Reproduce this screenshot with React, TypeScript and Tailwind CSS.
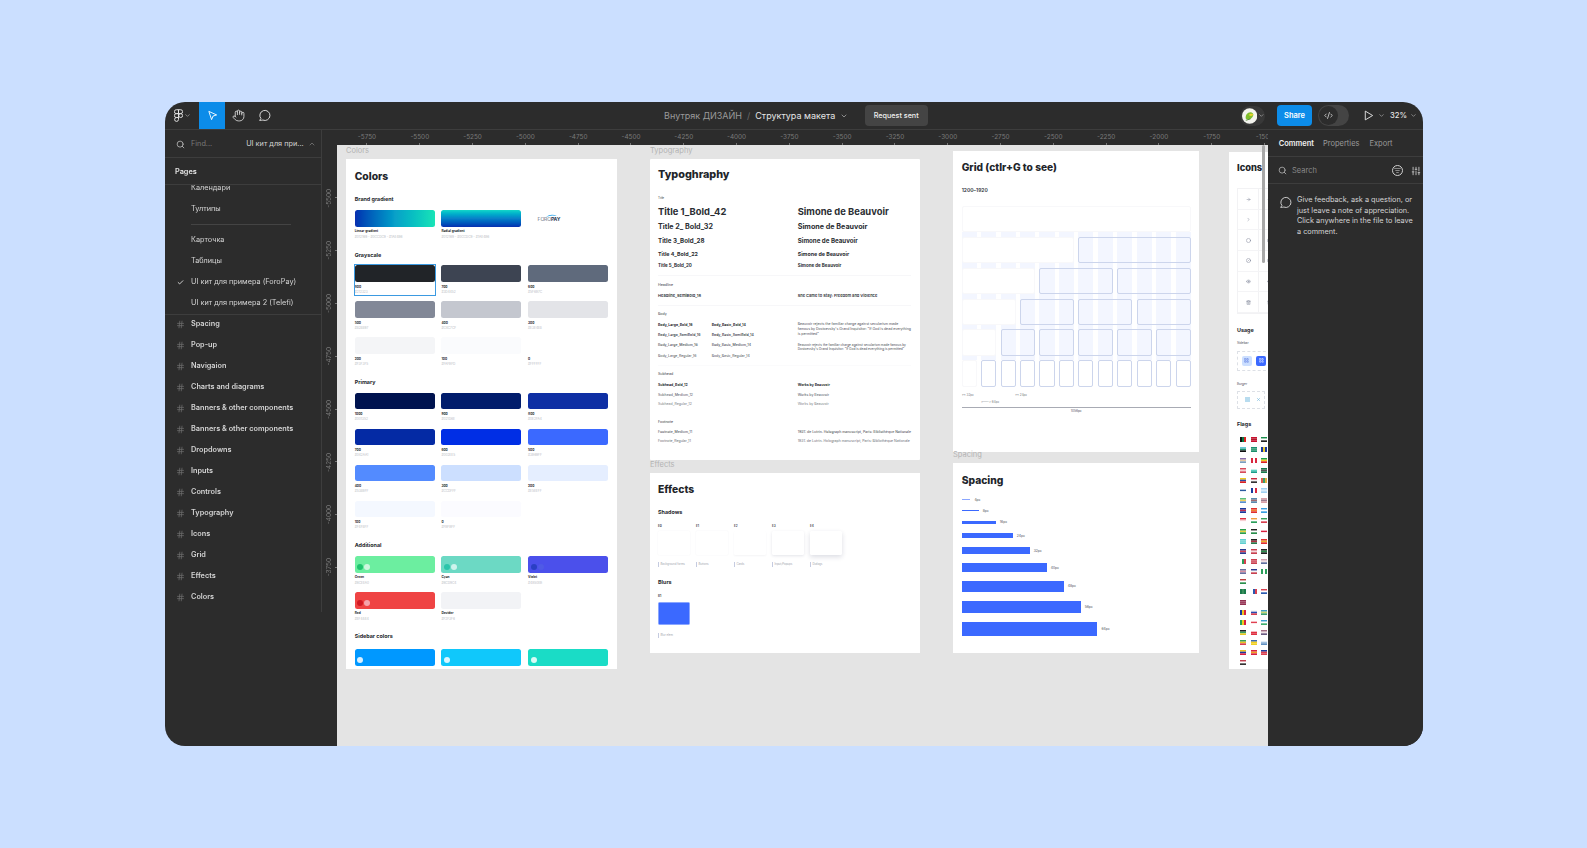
import React from "react";
import { Search, Hand, ChevronDown, ChevronUp, Check, Hash, SlidersVertical, ListFilter, CodeXml, ArrowRight, ChevronRight, Circle, CircleSlash, Eye, Trash2, X, LayoutGrid } from "lucide-react";

const CommentIcon = ({ s = 12, c = "#e6e6e6" }: { s?: number; c?: string }) => (
  <svg width={s} height={s} viewBox="0 0 24 24" fill="none" stroke={c} strokeWidth="1.7">
    <path d="M3 21 L5.4 17.6 A9.3 9.3 0 1 1 9 20.4 Q6 21 3 21 Z" strokeLinejoin="round" />
  </svg>
);
const PlayIcon = ({ s = 11 }: { s?: number }) => (
  <svg width={s} height={s} viewBox="0 0 12 12" fill="none" stroke="#e6e6e6" strokeWidth="1"><path d="M2.5 1.2 L10.5 6 L2.5 10.8 Z" strokeLinejoin="round" /></svg>
);
const Figma = () => (
  <svg width="9" height="13" viewBox="0 0 12 18" fill="none" stroke="#e6e6e6" strokeWidth="1.3">
    <path d="M6 1H3a2.7 2.7 0 0 0 0 5.4h3zM6 1h3a2.7 2.7 0 0 1 0 5.4H6zM6 6.4H3a2.7 2.7 0 0 0 0 5.4h3zM6 11.8H3a2.7 2.7 0 1 0 3 2.7z" />
    <circle cx="9" cy="9.1" r="2.7" />
  </svg>
);
const Cursor = () => (
  <svg width="11" height="11" viewBox="0 0 12 12" fill="none" stroke="#fff" strokeWidth="1"><path d="M2 1.5 L10.5 5.4 L6.6 6.6 L5 10.5 Z" strokeLinejoin="round" /></svg>
);
const Avatar = () => (
  <svg width="16" height="16" viewBox="0 0 16 16">
    <circle cx="8" cy="8" r="8" fill="#f4f4ee" />
    <path d="M4 11 C3 7 6 3.5 9.5 4 C12 4.5 12.5 7 11 9 C9.5 11 7 12.5 4 11 Z" fill="#7fbf2e" />
    <path d="M7 7 C8 5.5 11 5 12 6.5 C11 8 9 8.5 7 7 Z" fill="#e9d22f" />
    <path d="M4 12.5 L9 11" stroke="#3c7a1e" strokeWidth="0.8" />
  </svg>
);

const H = ({ className = "", children }: { className?: string; children: React.ReactNode }) => (
  <div className={`flex h-[6px] items-center text-[5.4px] font-bold leading-none text-[#25282e] whitespace-nowrap ${className}`}>{children}</div>
);
const CardTitle = ({ children }: { children: React.ReactNode }) => (
  <div className="flex h-[12px] items-center text-[10.3px] font-extrabold leading-none text-[#22252a] whitespace-nowrap">{children}</div>
);

type Sw = { bg: string; name: string; hex: string; dots?: string[] };
const Swatch = ({ bg, name, hex, dots }: Sw) => (
  <div className="h-[36px] w-[80px]">
    <div className={`flex h-[16.7px] items-end gap-[1.2px] rounded-[2.5px] pb-[3px] pl-[2.6px] ${bg}`}>
      {dots?.map((d, i) => <span key={i} className={`h-[6px] w-[6px] rounded-full ${d}`} />)}
    </div>
    <div className="mt-[2.6px] flex h-[5.3px] items-center text-[3.2px] font-bold leading-none text-[#25282e]">{name}</div>
    <div className="flex h-[5.3px] items-center text-[3.2px] leading-none text-[#b9bcc4]">{hex}</div>
  </div>
);
const SwGrid = ({ items, className = "" }: { items: (Sw | null)[]; className?: string }) => (
  <div className={`grid grid-cols-[80px_80px_80px] gap-x-[6.7px] ${className}`}>
    {items.map((it, i) => (it ? <Swatch key={i} {...it} /> : <div key={i} />))}
  </div>
);

const gray: Sw[] = [
  { bg: "bg-[#212428]", name: "800", hex: "#212323" },
  { bg: "bg-[#3d4452]", name: "700", hex: "#3D4452" },
  { bg: "bg-[#5f6a7c]", name: "600", hex: "#5F6B7C" },
  { bg: "bg-[#828897]", name: "500", hex: "#828897" },
  { bg: "bg-[#c4c7cf]", name: "400", hex: "#C4C7CF" },
  { bg: "bg-[#e3e4e8]", name: "300", hex: "#E3E4E8" },
  { bg: "bg-[#f4f5f7]", name: "200", hex: "#F3F3F5" },
  { bg: "bg-[#fafbfd]", name: "100", hex: "#FAFBFD" },
  { bg: "bg-white", name: "0", hex: "#FFFFFF" },
];
const primary: (Sw | null)[] = [
  { bg: "bg-[#00134f]", name: "1000", hex: "#001352" },
  { bg: "bg-[#011d6c]", name: "900", hex: "#021D6E" },
  { bg: "bg-[#0e2fa4]", name: "800", hex: "#0E2FA4" },
  { bg: "bg-[#042aa4]", name: "700", hex: "#042AA1" },
  { bg: "bg-[#002ee5]", name: "600", hex: "#002EE5" },
  { bg: "bg-[#3b69ff]", name: "500", hex: "#3B69FF" },
  { bg: "bg-[#538bff]", name: "400", hex: "#538BFF" },
  { bg: "bg-[#ccdfff]", name: "300", hex: "#CCDFFF" },
  { bg: "bg-[#e5eeff]", name: "200", hex: "#E5EEFF" },
  { bg: "bg-[#f4f8ff]", name: "100", hex: "#F4F8FF" },
  { bg: "bg-[#fbfbff]", name: "0", hex: "#FBFBFF" },
  null,
];
const additional: (Sw | null)[] = [
  { bg: "bg-[#6ceea0]", name: "Green", hex: "#6CEEA0", dots: ["bg-[#1fc46f]", "bg-[#cdf7de]"] },
  { bg: "bg-[#6cd9c4]", name: "Cyan", hex: "#6CD9C4", dots: ["bg-[#2cc5ab]", "bg-[#cdf3ec]"] },
  { bg: "bg-[#4b50eb]", name: "Violet", hex: "#4B50EB", dots: ["bg-[#2a3fc4]", "bg-[#4f5ae6]"] },
  { bg: "bg-[#ef4444]", name: "Red", hex: "#EF4444", dots: ["bg-[#d11a24]", "bg-[#f5a3ab]"] },
  { bg: "bg-[#f2f3f6]", name: "Devider", hex: "#F2F3F6" },
  null,
];
const sidebarColors = [
  { bg: "bg-[#0098ff]", dot: "bg-[#d9f0ff]" },
  { bg: "bg-[#10c8fb]", dot: "bg-[#d9f6ff]" },
  { bg: "bg-[#1adcc6]", dot: "bg-[#d9fbf6]" },
];

const ColorsCard = () => (
  <div className="relative h-full overflow-hidden bg-white pl-[8.7px] pt-[10.7px]">
    <CardTitle>Colors</CardTitle>
    <H className="mt-[15px]">Brand gradient</H>
    <div className="mt-[7.3px] flex gap-x-[6.7px]">
      <Swatch bg="bg-gradient-to-r from-[#0a2eb0] via-[#0aa0c8] to-[#1ae4b6]" name="Linear gradient" hex="#012169 - #0CCDC9 - #1AE4B6" />
      <Swatch bg="bg-gradient-to-b from-[#14d6c8] via-[#0a80c8] to-[#0a2eb0]" name="Radial gradient" hex="#012169 - #0CCDC9 - #1AE4B6" />
      <div className="flex h-[16.7px] w-[80px] flex-col items-start justify-center pl-[9.5px]">
        <svg width="11" height="3" viewBox="0 0 11 3" className="ml-[8px]"><path d="M0 3 Q5 -1 11 2 Q5 0.5 0 3 Z" fill="#1e9fe8" /></svg>
        <div className="text-[5px] leading-none tracking-[-0.1px] text-[#2b3a55]"><span className="font-light">FORO</span><span className="font-bold">PAY</span></div>
      </div>
    </div>
    <H className="mt-[6.4px]">Grayscale</H>
    <SwGrid items={gray} className="mt-[7px]" />
    <H className="mt-[6.3px]">Primary</H>
    <SwGrid items={primary} className="mt-[7px]" />
    <H className="mt-[6px]">Additional</H>
    <SwGrid items={additional} className="mt-[7.3px]" />
    <H className="mt-[6px]">Sidebar colors</H>
    <div className="mt-[9.4px] flex gap-x-[6.7px]">
      {sidebarColors.map((c) => (
        <div key={c.bg} className={`flex h-[16.7px] w-[80px] items-end rounded-[2.5px] pb-[3px] pl-[2.6px] ${c.bg}`}>
          <span className={`h-[6px] w-[6px] rounded-full ${c.dot}`} />
        </div>
      ))}
    </div>
    <div className="absolute left-[7.7px] top-[105px] h-[31.5px] w-[82px] border border-[#3b9ae1]" />
  </div>
);

const Mini = ({ className = "", children }: { className?: string; children: React.ReactNode }) => (
  <div className={`flex h-[10px] items-center text-[3.6px] leading-none text-[#3a3d44] whitespace-nowrap ${className}`}>{children}</div>
);
const TRow = ({ h, size, label }: { h: string; size: string; label: string }) => (
  <div className={`grid grid-cols-[139.7px_1fr] items-center font-bold leading-none text-[#2b2e33] whitespace-nowrap ${h} ${size}`}>
    <span>{label}</span>
    <span>Simone de Beauvoir</span>
  </div>
);
const TwoCol = ({ a, b, className = "" }: { a: string; b: string; className?: string }) => (
  <div className={`grid h-[10px] grid-cols-[139.7px_1fr] items-center text-[3.5px] leading-none whitespace-nowrap ${className}`}>
    <span>{a}</span>
    <span>{b}</span>
  </div>
);

const TypographyCard = () => (
  <div className="h-full overflow-hidden rounded-[1px] bg-white pl-[8px] pr-[9px] pt-[10.7px]">
    <div className="flex h-[12px] items-center text-[10.8px] font-extrabold leading-none text-[#22252a]">Typoghraphy</div>
    <Mini className="mt-[11px] h-[11.5px] text-[3px]">Title</Mini>
    <TRow h="h-[15px]" size="text-[9.4px]" label="Title 1_Bold_42" />
    <TRow h="h-[15px]" size="text-[7.2px]" label="Title 2_ Bold_32" />
    <TRow h="h-[14px]" size="text-[6.2px]" label="Title 3_Bold_28" />
    <TRow h="h-[12px]" size="text-[5.3px]" label="Title 4_Bold_22" />
    <TRow h="h-[12px]" size="text-[4.5px]" label="Title 5_Bold_20" />
    <div className="mt-[3px] border-t border-[#f7f7f9]" />
    <Mini className="mt-[4.2px]">Headline</Mini>
    <TwoCol a="Headline_SemiBold_18" b="She Came to Stay: Freedom and Violence" className="h-[12px] text-[4px] font-semibold text-[#2b2e33]" />
    <div className="mt-[2.7px] border-t border-[#f7f7f9]" />
    <Mini className="mt-[3.5px]">Body</Mini>
    <div className="mt-[1.2px] grid grid-cols-[139.7px_1fr]">
      <div className="grid h-[40.8px] grid-cols-[53.7px_1fr] grid-rows-4 items-center text-[3.5px] leading-none text-[#4a4d55] whitespace-nowrap">
        <span className="font-bold text-[#2b2e33]">Body_Large_Bold_16</span>
        <span className="font-bold text-[#2b2e33]">Body_Basic_Bold_14</span>
        <span className="font-semibold">Body_Large_SemiBold_16</span>
        <span className="font-semibold">Body_Basic_SemiBold_14</span>
        <span className="font-medium">Body_Large_Medium_16</span>
        <span className="font-medium">Body_Basic_Medium_14</span>
        <span>Body_Large_Regular_16</span>
        <span>Body_Basic_Regular_14</span>
      </div>
      <div className="pt-[1px] text-[3.5px] leading-[5px] text-[#4a4d55]">
        <p>Beauvoir rejects the familiar charge against secularism made famous by Dostoevsky's Grand Inquisitor: "If God is dead everything is permitted"</p>
        <p className="mt-[6px] text-[3.2px] leading-[4.4px]">Beauvoir rejects the familiar charge against secularism made famous by Dostoevsky's Grand Inquisitor: "If God is dead everything is permitted"</p>
      </div>
    </div>
    <div className="mt-[3.2px] border-t border-[#fbfbfc]" />
    <Mini className="mt-[3.7px]">Subhead</Mini>
    <TwoCol a="Subhead_Bold_12" b="Works by Beauvoir" className="mt-[1px] font-bold text-[#2b2e33]" />
    <TwoCol a="Subhead_Medium_12" b="Works by Beauvoir" className="font-medium text-[#6a6d75]" />
    <TwoCol a="Subhead_Regular_12" b="Works by Beauvoir" className="-mt-[0.3px] text-[#7a7d85]" />
    <Mini className="mt-[7.3px]">Footnote</Mini>
    <TwoCol a="Footnote_Medium_11" b="1931: de Lutrin. Holograph manuscript, Paris: Bibliothèque Nationale" className="font-medium text-[#5a5d65]" />
    <TwoCol a="Footnote_Regular_11" b="1931: de Lutrin. Holograph manuscript, Paris: Bibliothèque Nationale" className="-mt-[0.5px] text-[#6a6d75]" />
  </div>
);

const shadows = [
  { n: "E0", cap: "Background forms", s: "shadow-[0_0_2px_rgba(30,40,80,0.05)]" },
  { n: "E1", cap: "Buttons", s: "shadow-[0_0_2px_rgba(30,40,80,0.06)]" },
  { n: "E2", cap: "Cards", s: "shadow-[0_1px_2px_rgba(30,40,80,0.05)]" },
  { n: "E3", cap: "Input/Popups", s: "shadow-[0_1px_3px_rgba(30,40,80,0.12)]" },
  { n: "E4", cap: "Dialogs", s: "shadow-[0_2px_5px_rgba(30,40,80,0.16)]" },
];
const Caption = ({ children, className = "" }: { children: React.ReactNode; className?: string }) => (
  <div className={`flex h-[5px] items-center border-l border-[#c5cbe0] pl-[1.5px] text-[2.8px] leading-none text-[#a3a6ae] whitespace-nowrap ${className}`}>{children}</div>
);
const EffectsCard = () => (
  <div className="h-full overflow-hidden bg-white pl-[8px] pt-[10px]">
    <CardTitle>Effects</CardTitle>
    <H className="mt-[14.7px]">Shadows</H>
    <div className="mt-[9px] flex gap-x-[6px]">
      {shadows.map((x) => (
        <div key={x.n} className="w-[32px]">
          <div className="flex h-[4px] items-center text-[3px] font-semibold leading-none text-[#25282e]">{x.n}</div>
          <div className={`mt-[2.3px] h-[24px] w-[32px] rounded-[1.5px] bg-white ${x.s}`} />
          <Caption className="mt-[7.2px]">{x.cap}</Caption>
        </div>
      ))}
    </div>
    <H className="mt-[12.8px]">Blurs</H>
    <div className="mt-[9px] flex h-[4px] items-center text-[3px] font-semibold leading-none text-[#25282e]">B1</div>
    <div className="mt-[3px] h-[23px] w-[31.5px] rounded-[1.5px] border border-[#8aa6ff] bg-[#3b69ff]" />
    <Caption className="mt-[7.8px]">Blur elem</Caption>
  </div>
);

const Cell = ({ faint = false }: { faint?: boolean }) => (
  <div className={`rounded-[2px] border ${faint ? "border-[#f8f8fa] bg-white" : "border-[#ccd5ec]"}`} />
);
const GridRow = ({ cols, n, h, mt }: { cols: string; n: number; h: string; mt: string }) => (
  <div className={`grid gap-x-[4.4px] ${cols} ${h} ${mt}`}>
    {Array.from({ length: n }).map((_, i) => <Cell key={i} faint={i === 0} />)}
  </div>
);
const GridCard = () => (
  <div className="h-full overflow-hidden bg-white pl-[8.7px] pr-[8.3px] pt-[10.3px]">
    <div className="flex h-[12px] items-center text-[10.2px] font-extrabold leading-none text-[#22252a] whitespace-nowrap">Grid (ctlr+G to see)</div>
    <div className="mt-[14.7px] flex h-[6px] items-center text-[5px] font-semibold leading-none text-[#30333a]">1200–1920</div>
    <div className="relative mt-[12px] h-[180.7px]">
      <div className="absolute inset-x-0 inset-y-[26px] grid grid-cols-12 gap-x-[4.4px]">
        {Array.from({ length: 12 }).map((_, i) => <div key={i} className="bg-[#f3f6ff]" />)}
      </div>
      <div className="relative">
        <div className="h-[26.3px] rounded-[2px] border border-[#f8f8fa] bg-white" />
        <GridRow cols="grid-cols-2" n={2} h="h-[25.4px]" mt="mt-[5px]" />
        <GridRow cols="grid-cols-3" n={3} h="h-[25.4px]" mt="mt-[5.6px]" />
        <GridRow cols="grid-cols-4" n={4} h="h-[26px]" mt="mt-[5px]" />
        <GridRow cols="grid-cols-6" n={6} h="h-[26.4px]" mt="mt-[4.6px]" />
        <div className="mt-[4.6px] grid h-[26.4px] grid-cols-12 gap-x-[4.4px] bg-white">
          {Array.from({ length: 12 }).map((_, i) => <Cell key={i} faint={i === 0} />)}
        </div>
      </div>
    </div>
    <div className="mt-[6.5px] flex h-[4px] items-center text-[3px] leading-none text-[#70737b]">
      <span className="w-[53.3px]">&lt;-&gt; 32px</span>
      <span>&lt;-&gt; 24px</span>
    </div>
    <div className="mt-[3.8px] flex h-[4px] items-center pl-[19.3px] text-[3px] leading-none text-[#70737b]">&lt;———&gt; 64px</div>
    <div className="mt-[2.3px] border-t border-[#a8abb4]" />
    <div className="mt-[1.5px] flex h-[4px] items-center justify-center text-[3.2px] leading-none text-[#50535b]">1056px</div>
  </div>
);

const bars = [
  { w: "w-[8.7px]", h: "h-[1px]", l: "4px", bg: "bg-[#8aa6ff]" },
  { w: "w-[17px]", h: "h-[1.7px]", l: "8px", bg: "bg-[#3b69ff]" },
  { w: "w-[34px]", h: "h-[3.3px]", l: "16px", bg: "bg-[#3b69ff]" },
  { w: "w-[51px]", h: "h-[5px]", l: "24px", bg: "bg-[#3b69ff]" },
  { w: "w-[68px]", h: "h-[7px]", l: "32px", bg: "bg-[#3b69ff]" },
  { w: "w-[85px]", h: "h-[8.7px]", l: "40px", bg: "bg-[#3b69ff]" },
  { w: "w-[102px]", h: "h-[10.3px]", l: "48px", bg: "bg-[#3b69ff]" },
  { w: "w-[119px]", h: "h-[12px]", l: "56px", bg: "bg-[#3b69ff]" },
  { w: "w-[135.7px]", h: "h-[13.7px]", l: "64px", bg: "bg-[#3b69ff]" },
];
const SpacingCard = () => (
  <div className="h-full overflow-hidden bg-white pl-[8.7px] pt-[10.7px]">
    <CardTitle>Spacing</CardTitle>
    <div className="mt-[13.8px] flex flex-col gap-y-[9.2px]">
      {bars.map((b) => (
        <div key={b.l} className="flex items-center gap-x-[4px]">
          <div className={`${b.w} ${b.h} ${b.bg}`} />
          <span className="h-0 text-[3.4px] leading-[0] text-[#50535b]">{b.l}</span>
        </div>
      ))}
    </div>
  </div>
);

const flags: [string[], boolean][][] = [
  [[["#111", "#0a7a45", "#d22"], true], [["#c8102e", "#b0182c", "#c8102e"], false], [["#1a8f4c", "#fff", "#222"], false]],
  [[["#68c8d8", "#1a8f6c", "#111"], false], [["#1a8f6c", "#3aa078", "#1a8f6c"], false], [["#1a3a9f", "#e8c82f", "#1a3a9f"], true]],
  [[["#8a6fb0", "#e8c8a0", "#7a9fc0"], false], [["#d8283f", "#fff", "#d8283f"], true], [["#1a9f4c", "#f0d020", "#d22"], false]],
  [[["#d84a5a", "#f4d0d4", "#d84a5a"], false], [["#fff", "#58d0c0", "#1a9f8c"], false], [["#1a7a4c", "#555", "#1a7a4c"], false]],
  [[["#f0c820", "#2a4a9f", "#d22"], false], [["#c8283f", "#f4f4f4", "#333"], false], [["#e05a4a", "#3a9f6c", "#e0b040"], true]],
  [[["#fff", "#2a5a9f", "#fff"], false], [["#1a3a9f", "#fff", "#d8283f"], true], [["#a0d0f0", "#d8ecf8", "#a0d0f0"], false]],
  [[["#5ac080", "#f0d060", "#5a90d0"], false], [["#5a8ab0", "#a06a70", "#5a8ab0"], false], [["#d8a0a8", "#9a7a90", "#d8a0a8"], false]],
  [[["#1a3a9f", "#c03050", "#1a3a9f"], false], [["#e03030", "#f08030", "#e03030"], false], [["#3a9fe0", "#fff", "#3a9fe0"], false]],
  [[["#e03040", "#f8d0d4", "#fff"], false], [["#f0a040", "#fff", "#2a9f5a"], false], [["#3a9f5a", "#fff", "#d84050"], false]],
  [[["#2a9f4c", "#e8d040", "#2a9f4c"], false], [["#222", "#fff", "#2a8f4c"], false], [["#fff", "#d82040", "#fff"], false]],
  [[["#60d0d0", "#80d8d8", "#60d0d0"], false], [["#222", "#b03040", "#2a7a4c"], false], [["#e03030", "#e8b030", "#e03030"], false]],
  [[["#2a3a8f", "#d84050", "#2a3a8f"], false], [["#c84050", "#f4d8dc", "#c84050"], false], [["#222", "#2a8f4c", "#222"], false]],
  [[["#fff", "#2a9f5a", "#d84050"], true], [["#c84050", "#d86070", "#c84050"], false], [["#d0a0b0", "#f0e0e4", "#6070a0"], false]],
  [[["#6a70a0", "#d890a0", "#6a70a0"], false], [["#2a3a8f", "#f4f4f4", "#c84050"], false], [["#2a9f5a", "#fff", "#2a9f5a"], true]],
  [[["#b84040", "#fff", "#2a8f4c"], false]],
  [[["#1a7a4c", "#3a8f5c", "#1a7a4c"], true], [["#fff", "#2a5ab0", "#d84050"], true], [["#d84050", "#fff", "#2a5ab0"], false]],
  [[["#903050", "#a04060", "#903050"], false]],
  [[["#1a3a9f", "#e8c820", "#d82040"], true], [["#f4f4f4", "#2a4ab0", "#d84050"], false], [["#40a0c0", "#c8d870", "#40a070"], false]],
  [[["#2a9f5a", "#e8d020", "#d82040"], true], [["#fff", "#e04050", "#fff"], false], [["#3aa0d0", "#fff", "#40b070"], false]],
  [[["#222", "#3aa060", "#e8c820"], false], [["#fff", "#e03040", "#e03040"], false], [["#a06a80", "#f0e0e4", "#6a5a80"], false]],
  [[["#3a9f5a", "#e8c020", "#d84050"], false], [["#3a6ab0", "#f0d020", "#f0d020"], false], [["#fff", "#a0c0e0", "#6090c0"], false]],
  [[["#e8c020", "#1a3a9f", "#d82040"], false], [["#d82040", "#f0a020", "#d82040"], false], [["#1a3a9f", "#d84050", "#d84050"], false]],
  [[["#c04050", "#fff", "#333"], false]],
];
const Flag = ({ colors, v }: { colors: string[]; v: boolean }) => (
  <svg width="6" height="5" viewBox="0 0 6 5" preserveAspectRatio="none">
    {colors.map((c, i) =>
      v ? <rect key={i} x={i * 2} y={0} width={2} height={5} fill={c} /> : <rect key={i} x={0} y={(i * 5) / 3} width={6} height={5 / 3} fill={c} />
    )}
  </svg>
);
const tableIcons = [ArrowRight, ChevronRight, Circle, CircleSlash, Eye, Trash2];
const IconsCard = () => (
  <div className="h-full w-[80px] overflow-hidden bg-white pl-[8px] pt-[10.7px]">
    <div className="flex h-[10px] items-center text-[9.3px] font-extrabold leading-none text-[#22252a]">Icons</div>
    <div className="mt-[15.6px] w-[100px] border border-[#f2f2f4]">
      {tableIcons.map((Ic, i) => (
        <div key={i} className="flex h-[20.6px] border-b border-[#f4f4f6]">
          <div className="flex w-[21px] items-center justify-center border-r border-[#f2f2f4]"><Ic size={5} color="#6a7388" /></div>
          <div className="flex w-[21px] items-center justify-center"><Ic size={5} color="#6a7388" /></div>
        </div>
      ))}
    </div>
    <H className="mt-[13.7px] text-[4.4px]">Usage</H>
    <div className="mt-[7.3px] flex h-[6px] items-center text-[3.2px] leading-none text-[#50535b]">Sidebar</div>
    <div className="mt-[4px] flex h-[20px] w-[60px] items-center gap-x-[4.5px] rounded-[1px] border border-dashed border-[#dde0e6] pl-[3.5px]">
      <span className="flex h-[10px] w-[10px] items-center justify-center rounded-[2px] bg-[#ccdfff]"><LayoutGrid size={5} color="#5a7ae0" /></span>
      <span className="flex h-[10px] w-[10px] items-center justify-center rounded-[2px] bg-[#3b69ff]"><LayoutGrid size={5} color="#fff" /></span>
    </div>
    <div className="mt-[10.7px] flex h-[6px] items-center text-[3.2px] leading-none text-[#50535b]">Burger</div>
    <div className="mt-[3.3px] flex h-[18px] w-[28px] items-center gap-x-[5.5px] rounded-[1px] border border-dashed border-[#dde0e6] pl-[7px]">
      <span className="h-[5px] w-[5px] bg-[#b8dcef]" />
      <X size={5} color="#4aa0d0" />
    </div>
    <H className="mt-[13px] text-[4.4px]">Flags</H>
    <div className="mt-[9.5px] flex flex-col gap-y-[5.15px] pl-[3.3px]">
      {flags.map((row, i) => (
        <div key={i} className="flex h-[5px] gap-x-[4.3px]">
          {row.map((f, j) => <Flag key={j} colors={f[0]} v={f[1]} />)}
        </div>
      ))}
    </div>
  </div>
);

const Frame = ({ pos, label, children }: { pos: string; label?: string; children: React.ReactNode }) => (
  <div className={`absolute ${pos}`}>
    {label && <div className="absolute -top-[13px] left-0 flex h-[10px] items-center text-[7.5px] leading-none text-[#b3b3b3]">{label}</div>}
    {children}
  </div>
);

const pagesTop = ["Календари", "Тултипы"];
const frames = ["Spacing", "Pop-up", "Navigaion", "Charts and diagrams", "Banners & other components", "Banners & other components", "Dropdowns", "Inputs", "Controls", "Typography", "Icons", "Grid", "Effects", "Colors"];
const PageRow = ({ label, check }: { label: string; check?: boolean }) => (
  <div className="flex h-[21px] shrink-0 items-center">
    <span className="flex w-[26px] justify-center pl-[4px]">{check && <Check size={7} color="#e6e6e6" strokeWidth={3} />}</span>
    <span className="whitespace-nowrap text-[7.3px] leading-none text-[#d4d4d4]">{label}</span>
  </div>
);
const Sidebar = () => (
  <div className="w-[157px] shrink-0">
    <div className="flex h-[482px] flex-col border-r border-[#3d3d3d]">
      <div className="flex h-[28px] shrink-0 items-center border-b border-[#3d3d3d] pl-[11px] pt-[1px] text-[7.3px] leading-none">
        <Search size={9} color="#c8c8c8" />
        <span className="ml-[6px] text-[#7a7a7a]">Find...</span>
        <span className="ml-[34px] text-[#d4d4d4]">UI кит для при...</span>
        <ChevronUp size={8} color="#8a8a8a" className="ml-[4px]" />
      </div>
      <div className="flex h-[27px] shrink-0 items-center border-b border-[#3d3d3d] pl-[10px] pt-[1px] text-[7.3px] font-semibold leading-none text-[#e6e6e6]">Pages</div>
      <div className="flex-1 overflow-hidden">
        <div className="-mt-[8px]">
          {pagesTop.map((p) => <PageRow key={p} label={p} />)}
          <div className="flex h-[10.5px] items-center pl-[26px]"><div className="h-px w-[100px] bg-[#444]" /></div>
          <PageRow label="Карточка" />
          <PageRow label="Таблицы" />
          <PageRow label="UI кит для примера (ForoPay)" check />
          <PageRow label="UI кит для примера 2 (Telefi)" />
          <div className="-mb-px h-px bg-[#3d3d3d]" />
          {frames.map((f, i) => (
            <div key={i} className="flex h-[21px] items-center">
              <span className="flex w-[26px] justify-center pl-[4px]"><Hash size={9} color="#6e6e6e" /></span>
              <span className="whitespace-nowrap text-[7.3px] font-semibold leading-none text-[#d4d4d4]">{f}</span>
            </div>
          ))}
        </div>
      </div>
    </div>
  </div>
);

const hLabels = ["-5750", "-5500", "-5250", "-5000", "-4750", "-4500", "-4250", "-4000", "-3750", "-3500", "-3250", "-3000", "-2750", "-2500", "-2250", "-2000", "-1750", "-1500"];
const vLabels = ["-5500", "-5250", "-5000", "-4750", "-4500", "-4250", "-4000", "-3750"];

export default function App() {
  return (
    <div className="h-[848px] w-[1587px] overflow-hidden bg-[#cbdfff] pl-[165px] pt-[102px] font-[Inter,sans-serif]">
      <div className="flex h-[644px] w-[1258px] flex-col overflow-hidden rounded-[20px] bg-[#2c2c2c] blur-[0.35px]">
        <div className="flex h-[28px] shrink-0 items-center border-b border-[#3d3d3d] pr-[6px]">
          <div className="flex w-[34px] shrink-0 items-center pl-[9px]">
            <Figma />
            <ChevronDown size={7} color="#bdbdbd" className="ml-[1px]" />
          </div>
          <div className="flex h-full w-[26px] shrink-0 items-center justify-center bg-[#0c8ce9]"><Cursor /></div>
          <div className="flex w-[26px] shrink-0 justify-center"><Hand size={13} color="#e6e6e6" strokeWidth={1.5} /></div>
          <div className="flex w-[26px] shrink-0 justify-center"><CommentIcon s={13} /></div>
          <div className="ml-[387px] flex shrink-0 items-center whitespace-nowrap text-[9px] leading-none">
            <span className="text-[#9a9a9a]">Внутряк ДИЗАЙН</span>
            <span className="mx-[5px] text-[#6a6a6a]">/</span>
            <span className="text-[#e6e6e6]">Структура макета</span>
            <ChevronDown size={8} color="#bdbdbd" className="ml-[5px]" />
          </div>
          <div className="ml-[16.5px] flex h-[21px] w-[63px] shrink-0 items-center justify-center rounded-[4px] bg-[#444] text-[7.2px] font-medium leading-none text-[#f0f0f0]">Request sent</div>
          <div className="ml-auto flex shrink-0 items-center">
            <div className="flex h-[20px] w-[25px] items-center rounded-full bg-[#383838] pl-[2px]">
              <Avatar />
              <ChevronDown size={7} color="#bdbdbd" className="ml-[1px]" />
            </div>
            <div className="ml-[12px] flex h-[21px] w-[35px] items-center justify-center rounded-[4px] bg-[#0c8ce9] text-[7.5px] font-semibold leading-none text-white">Share</div>
            <div className="ml-[6px] flex h-[21px] w-[31px] items-center rounded-full bg-[#444] pl-[1px]">
              <span className="flex h-[19px] w-[19px] items-center justify-center rounded-full bg-[#2c2c2c]"><CodeXml size={9} color="#e6e6e6" /></span>
            </div>
            <div className="ml-[14px]"><PlayIcon /></div>
            <ChevronDown size={7} color="#bdbdbd" className="ml-[4px]" />
            <span className="ml-[5px] text-[7.6px] font-medium leading-none text-[#e6e6e6]">32%</span>
            <ChevronDown size={7} color="#bdbdbd" className="ml-[3px]" />
          </div>
        </div>
        <div className="flex min-h-0 flex-1">
          <Sidebar />
          <div className="flex min-w-0 flex-1 flex-col">
            <div className="flex h-[15px] shrink-0 overflow-hidden pl-[18.6px]">
              {hLabels.map((l) => (
                <div key={l} className="flex w-[52.8px] shrink-0 flex-col items-center">
                  <span className="mt-[2px] h-[10px] text-[6.4px] leading-[10px] text-[#7a7a7a]">{l}</span>
                  <span className="mt-[1px] h-[2px] w-px bg-[#777]" />
                </div>
              ))}
            </div>
            <div className="flex min-h-0 flex-1">
              <div className="w-[15px] shrink-0 pt-[26.6px]">
                {vLabels.map((l) => (
                  <div key={l} className="flex h-[52.8px] items-center justify-end">
                    <span className="mr-[3px] text-[6.4px] leading-none text-[#7a7a7a] [writing-mode:vertical-rl] rotate-180">{l}</span>
                    <span className="h-px w-[2px] bg-[#777]" />
                  </div>
                ))}
              </div>
              <div className="relative min-w-0 flex-1 overflow-hidden bg-[#e4e4e4]">
                <Frame pos="left-[9px] top-[14px] h-[510px] w-[271px]" label="Colors"><ColorsCard /></Frame>
                <Frame pos="left-[313px] top-[14px] h-[301px] w-[270px]" label="Typography"><TypographyCard /></Frame>
                <Frame pos="left-[313px] top-[328px] h-[180px] w-[270px]" label="Effects"><EffectsCard /></Frame>
                <Frame pos="left-[616px] top-[6px] h-[301px] w-[246px]"><GridCard /></Frame>
                <Frame pos="left-[616px] top-[318px] h-[190px] w-[246px]" label="Spacing"><SpacingCard /></Frame>
                <Frame pos="left-[892px] top-[7px] h-[517px] w-[80px]"><IconsCard /></Frame>
                <div className="absolute right-[3px] top-0 h-[118px] w-[3px] rounded-full bg-[#a8a8a8]" />
              </div>
            </div>
          </div>
          <div className="z-10 w-[155px] shrink-0 bg-[#2c2c2c]">
            <div className="flex h-[27px] items-center border-b border-[#3d3d3d] pl-[10.7px] pt-[2px] text-[7.5px] leading-none">
              <span className="font-semibold text-[#f0f0f0]">Comment</span>
              <span className="ml-[9px] text-[#9a9a9a]">Properties</span>
              <span className="ml-[10px] text-[#9a9a9a]">Export</span>
            </div>
            <div className="flex h-[27px] items-center border-b border-[#3d3d3d] pl-[10px] pt-[1.5px] text-[7.5px] leading-none text-[#8a8a8a]">
              <Search size={9} color="#bdbdbd" />
              <span className="ml-[5px]">Search</span>
              <span className="ml-[75px] flex h-[11px] w-[11px] items-center justify-center rounded-full border border-[#d0d0d0]"><ListFilter size={7} color="#d0d0d0" /></span>
              <SlidersVertical size={10} color="#d0d0d0" className="ml-[8px]" />
            </div>
            <div className="flex pl-[11px] pt-[11px]">
              <span className="mt-[1px]"><CommentIcon s={13} c="#d8d8d8" /></span>
              <p className="ml-[5px] w-[118px] text-[7.3px] leading-[10.6px] text-[#d4d4d4]">Give feedback, ask a question, or just leave a note of appreciation. Click anywhere in the file to leave a comment.</p>
            </div>
          </div>
        </div>
      </div>
    </div>
  );
}
